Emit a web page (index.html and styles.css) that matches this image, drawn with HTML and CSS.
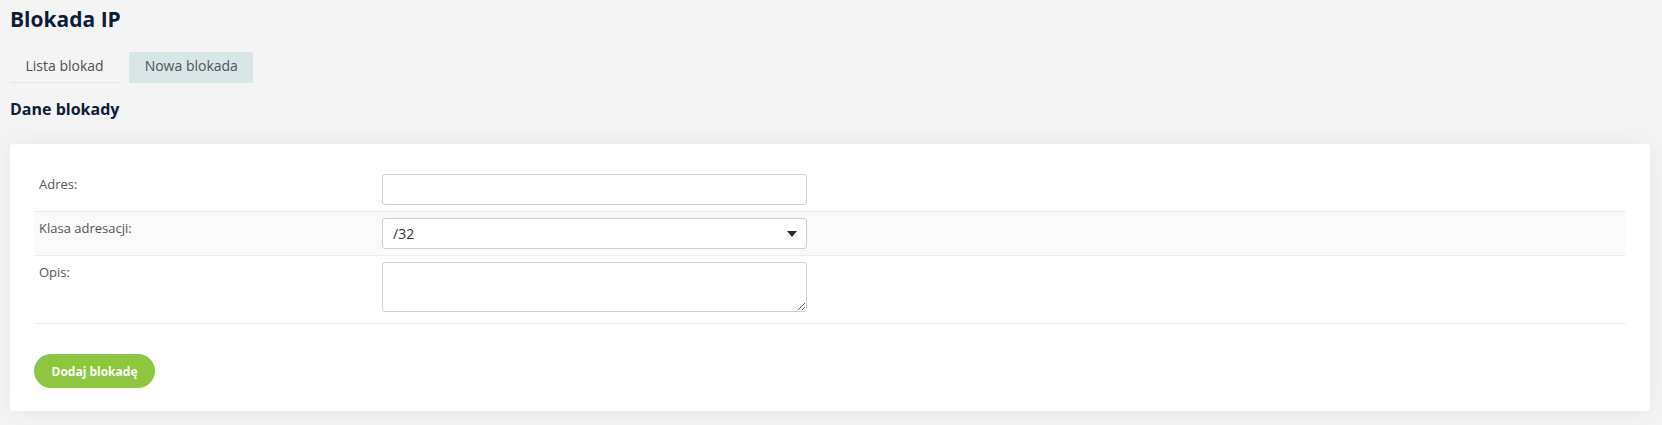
FILE: index.html
```html
<!DOCTYPE html>
<html lang="pl">
<head>
<meta charset="utf-8">
<title>Blokada IP</title>
<link rel="stylesheet" href="styles.css">
</head>
<body>
<div class="page">
  <h1 class="page-title">Blokada IP</h1>
  <nav class="tabs">
    <a class="tab">Lista blokad</a>
    <a class="tab tab-active">Nowa blokada</a>
  </nav>
  <h2 class="section-title">Dane blokady</h2>
  <div class="card">
    <form class="form">
      <div class="form-row">
        <label class="form-label">Adres:</label>
        <div class="form-field"><input class="input" type="text"></div>
      </div>
      <div class="form-row form-row-alt">
        <label class="form-label">Klasa adresacji:</label>
        <div class="form-field">
          <div class="select-wrap">
            <select class="input select">
              <option>/32</option>
            </select>
          </div>
        </div>
      </div>
      <div class="form-row">
        <label class="form-label">Opis:</label>
        <div class="form-field"><textarea class="input textarea"></textarea></div>
      </div>
      <div class="form-actions">
        <button type="button" class="btn-primary">Dodaj blokadę</button>
      </div>
    </form>
  </div>
</div>
</body>
</html>
```
FILE: styles.css
```css
* { box-sizing: border-box; }
html, body { margin: 0; padding: 0; }
body {
  background: #f4f4f4;
  font-family: "Open Sans", "Liberation Sans", sans-serif;
  color: #555;
}
.page {
  padding: 7px 12px 14px 10px;
}
.page-title {
  margin: 0;
  font-size: 21px;
  line-height: 25px;
  font-weight: 700;
  color: #0e1c37;
}
.tabs {
  display: flex;
  gap: 10px;
  margin-top: 20px;
}
.tab {
  display: block;
  height: 31px;
  padding: 4px 15.5px 0;
  font-size: 14px;
  line-height: 20px;
  color: #4f4f4f;
  border-bottom: 1px solid #dde5ea;
  border-radius: 2px 2px 0 0;
}
.tab-active {
  background: #d9e6e8;
  border-bottom-color: #d9e6e8;
  color: #4c5358;
}
.section-title {
  margin: 16px 0 0;
  font-size: 16px;
  line-height: 20px;
  font-weight: 700;
  color: #0e1c37;
  height: 20px;
}
.card {
  margin-top: 25px;
  background: #fff;
  border-radius: 4px;
  box-shadow: 0 0 24px rgba(0, 0, 0, 0.055);
  padding: 24px 24px 23px;
}
.form-row {
  display: grid;
  grid-template-columns: 348px 425px;
  padding: 6px 0;
  border-bottom: 1px solid #ececec;
}
.form-row-alt {
  background: #fafafa;
}
.form-label {
  padding-left: 5px;
  font-size: 13px;
  line-height: 20px;
  color: #555;
}
.input {
  display: block;
  width: 425px;
  height: 31px;
  border: 1px solid #cfcfcf;
  border-radius: 3px;
  background: #fff;
  font-family: inherit;
  font-size: 14px;
  color: #333;
  padding: 0 10px;
  margin: 0;
  outline: none;
}
.select-wrap {
  position: relative;
  width: 425px;
}
.select {
  appearance: none;
  -webkit-appearance: none;
  padding-left: 10px;
}
.select-wrap::after {
  content: "";
  position: absolute;
  right: 10px;
  top: 13px;
  width: 0;
  height: 0;
  border-left: 5px solid transparent;
  border-right: 5px solid transparent;
  border-top: 6px solid #2b2b2b;
  pointer-events: none;
}
.textarea {
  height: 50px;
  margin-bottom: 5px;
  resize: both;
  padding: 6px 10px;
}
.form-actions {
  padding-top: 30px;
}
.btn-primary {
  height: 34px;
  padding: 0 17.5px;
  border: 0;
  border-radius: 17px;
  background: #8dc63f;
  color: #fff;
  font-family: inherit;
  font-size: 12px;
  font-weight: 700;
  cursor: pointer;
}
```
